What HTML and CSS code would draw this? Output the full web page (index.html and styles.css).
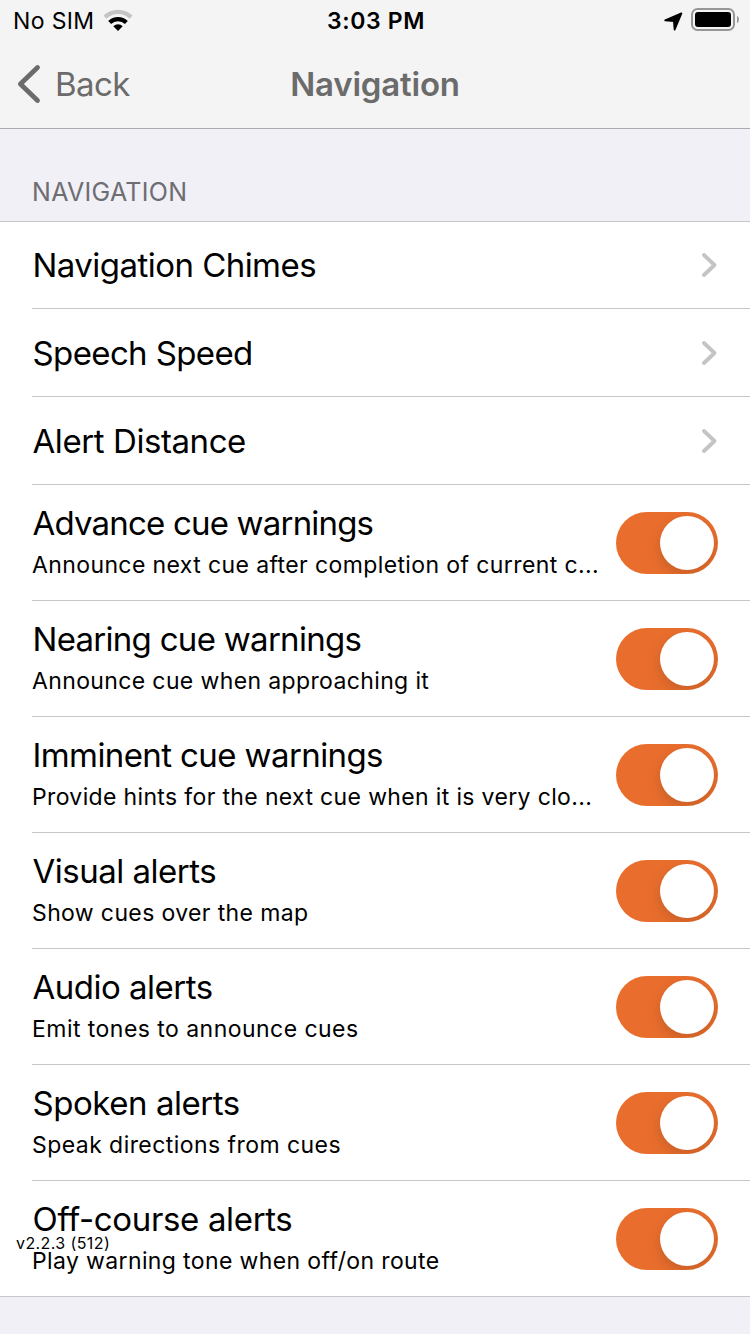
FILE: index.html
```
<!DOCTYPE html>
<html lang="en">
<head>
    <meta charset="UTF-8">
    <meta name="viewport" content="width=device-width, initial-scale=1.0">
    <title>Navigation</title>
    <link rel="stylesheet" href="styles.css">
</head>
<body>

    <header class="header">
        <div class="status-bar">
            <div class="status-left">
                <span class="carrier">No SIM</span>
                <svg class="wifi" width="30" height="23" viewBox="0 0 30 23">
                    <path d="M0.5 6.6 A20.8 20.8 0 0 1 29.5 6.6 L26.6 9.8 A16.4 16.4 0 0 0 3.4 9.8 Z" fill="#c4c4c4"/>
                    <path d="M5.2 12 A13.8 13.8 0 0 1 24.8 12 L21.9 15 A9.9 9.9 0 0 0 8.1 15 Z" fill="#000"/>
                    <path d="M10.3 17.2 A6.8 6.8 0 0 1 19.7 17.2 L15 22 Z" fill="#000"/>
                </svg>
            </div>
            <span class="clock">3:03 PM</span>
            <div class="status-right">
                <svg class="location" width="19" height="19" viewBox="0 0 19 19">
                    <path d="M1.2 8.3 L17.4 1.4 L10.6 17.6 L9.9 9.2 Z" fill="#000" stroke="#000" stroke-width="1.8" stroke-linejoin="round"/>
                </svg>
                <svg class="battery" width="48" height="24" viewBox="0 0 48 24">
                    <rect x="1" y="1" width="42" height="21" rx="5.5" fill="none" stroke="#979797" stroke-width="2"/>
                    <rect x="4" y="4" width="36" height="15" rx="3" fill="#000"/>
                    <path d="M46 7.8 Q48 9 48 11.5 Q48 14 46 15.2 Z" fill="#979797"/>
                </svg>
            </div>
        </div>
        <nav class="nav-bar">
            <a class="back">
                <svg width="24" height="40" viewBox="0 0 24 40">
                    <path d="M20.5 3.5 L3.4 20 L20.5 36.5" fill="none" stroke="#6b6b6b" stroke-width="4.8" stroke-linecap="round" stroke-linejoin="round"/>
                </svg>
                <span class="back-label">Back</span>
            </a>
            <h1 class="nav-title">Navigation</h1>
        </nav>
    </header>

    <h2 class="section-title">NAVIGATION</h2>

    <ul class="list">
        <li class="row row-link row-first">
            <span class="title t-chimes">Navigation Chimes</span>
            <svg class="chevron" width="16" height="26" viewBox="0 0 16 26"><path d="M2 3 L12.5 13 L2 23"/></svg>
        </li>
        <li class="row row-link">
            <span class="title t-speed">Speech Speed</span>
            <svg class="chevron" width="16" height="26" viewBox="0 0 16 26"><path d="M2 3 L12.5 13 L2 23"/></svg>
        </li>
        <li class="row row-link">
            <span class="title t-distance">Alert Distance</span>
            <svg class="chevron" width="16" height="26" viewBox="0 0 16 26"><path d="M2 3 L12.5 13 L2 23"/></svg>
        </li>
        <li class="row">
            <div class="text">
                <span class="title t-advance">Advance cue warnings</span>
                <span class="subtitle s-advance">Announce next cue after completion of current c...</span>
            </div>
            <span class="switch"></span>
        </li>
        <li class="row">
            <div class="text">
                <span class="title t-nearing">Nearing cue warnings</span>
                <span class="subtitle">Announce cue when approaching it</span>
            </div>
            <span class="switch"></span>
        </li>
        <li class="row">
            <div class="text">
                <span class="title t-imminent">Imminent cue warnings</span>
                <span class="subtitle s-imminent">Provide hints for the next cue when it is very clo...</span>
            </div>
            <span class="switch"></span>
        </li>
        <li class="row">
            <div class="text">
                <span class="title t-visual">Visual alerts</span>
                <span class="subtitle">Show cues over the map</span>
            </div>
            <span class="switch"></span>
        </li>
        <li class="row">
            <div class="text">
                <span class="title t-audio">Audio alerts</span>
                <span class="subtitle s-audio">Emit tones to announce cues</span>
            </div>
            <span class="switch"></span>
        </li>
        <li class="row">
            <div class="text">
                <span class="title t-spoken">Spoken alerts</span>
                <span class="subtitle s-spoken">Speak directions from cues</span>
            </div>
            <span class="switch"></span>
        </li>
        <li class="row">
            <div class="text">
                <span class="title t-offcourse">Off-course alerts</span>
                <span class="subtitle">Play warning tone when off/on route</span>
            </div>
            <span class="switch"></span>
        </li>
    </ul>

    <span class="version">v2.2.3 (512)</span>

</body>
</html>
```
FILE: styles.css
```
* {
    box-sizing: border-box;
}
body {
    margin: 0;
    height: 1334px;
    overflow: hidden;
    position: relative;
    background-color: #f0f0f6;
    font-family: Inter, "Liberation Sans", sans-serif;
    color: #000;
}
.header {
    height: 129px;
    background-color: #f4f4f4;
    border-bottom: 1px solid #a9a9ae;
}
.status-bar {
    display: grid;
    grid-template-columns: 1fr auto 1fr;
    align-items: center;
    height: 40px;
    padding: 0 11px 0 13px;
    font-size: 23px;
    line-height: 38px;
}
.status-left {
    display: flex;
    align-items: center;
    gap: 9px;
}
.carrier {
    padding-top: 2px;
    letter-spacing: 0.35px;
}
.clock {
    padding-top: 2px;
    font-weight: 600;
    letter-spacing: 0.65px;
}
.status-right {
    display: flex;
    align-items: center;
    justify-content: flex-end;
    gap: 8px;
}
.location {
    margin-top: 2px;
}
.nav-bar {
    display: grid;
    grid-template-columns: 1fr auto 1fr;
    align-items: center;
    height: 88px;
    padding: 0 17px;
    color: #6b6b6b;
}
.back {
    display: flex;
    align-items: center;
    gap: 14px;
    font-size: 33px;
    letter-spacing: -0.6px;
}
.nav-title {
    margin: 0;
    font-size: 33px;
    font-weight: 600;
    letter-spacing: -0.2px;
}
.section-title {
    height: 93px;
    margin: 0;
    padding: 43px 32px 0;
    border-bottom: 1px solid #c8c7cc;
    color: #6d6d72;
    font-size: 25px;
    font-weight: 400;
    line-height: 40px;
    letter-spacing: 0.3px;
}
.list {
    margin: 0;
    padding: 0;
    list-style: none;
    background-color: #fff;
    border-bottom: 1px solid #c6c6c8;
}
.row {
    display: flex;
    align-items: center;
    justify-content: space-between;
    height: 116px;
    margin-left: 32px;
    padding-right: 32px;
    border-bottom: 1px solid #c6c6c8;
}
.row:last-child {
    height: 115px;
    border-bottom: none;
}
.row-link {
    height: 88px;
}
.row-first {
    height: 87px;
}
.text {
    display: flex;
    flex-direction: column;
    padding-top: 2px;
}
.title {
    padding-left: 0.5px;
    font-size: 33px;
    line-height: 42px;
    white-space: nowrap;
    letter-spacing: -0.5px;
}
.subtitle {
    height: 41px;
    font-size: 23px;
    line-height: 43px;
    white-space: nowrap;
    letter-spacing: 0.37px;
}

/* tracking per label */
.t-chimes { letter-spacing: -0.54px; }
.t-speed { letter-spacing: -0.62px; }
.t-distance { letter-spacing: -0.42px; }
.t-advance { letter-spacing: -0.81px; }
.t-nearing { letter-spacing: -0.71px; }
.t-imminent { letter-spacing: -0.6px; }
.t-spoken { letter-spacing: -0.45px; }
.t-offcourse { letter-spacing: -0.34px; }
.s-advance { letter-spacing: 0.39px; }
.s-imminent { letter-spacing: 0.35px; }
.s-audio { letter-spacing: 0.46px; }
.s-spoken { letter-spacing: 0.44px; }

.chevron path {
    fill: none;
    stroke: #c4c4c6;
    stroke-width: 3.8;
    stroke-linecap: round;
    stroke-linejoin: round;
}
.switch {
    display: flex;
    justify-content: flex-end;
    flex-shrink: 0;
    width: 102px;
    height: 62px;
    padding: 4px;
    border-radius: 31px;
    background-color: #e96e2d;
    overflow: hidden;
}
.switch::after {
    content: "";
    width: 54px;
    height: 54px;
    border-radius: 50%;
    background-color: #fff;
    box-shadow: 0 5px 14px rgba(0,0,0,0.15);
}
/* version label floats over the list */
.version {
    position: absolute;
    left: 16px;
    top: 1233px;
    font-size: 16px;
    line-height: 20px;
    letter-spacing: 0.4px;
}
```
